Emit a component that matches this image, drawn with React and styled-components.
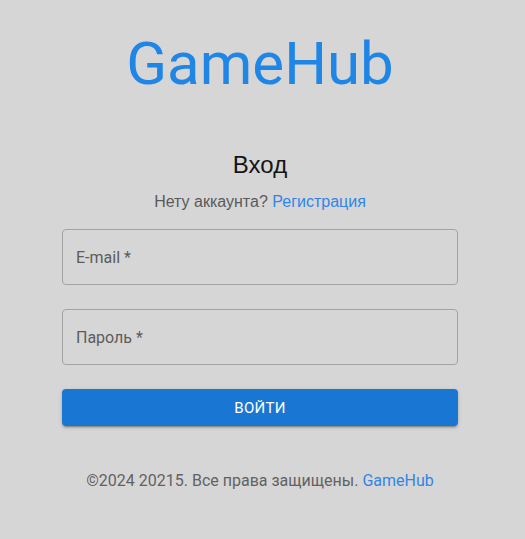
import React from "react";
import styled, { createGlobalStyle } from "styled-components";

const GlobalStyle = createGlobalStyle`
  html, body {
    margin: 0;
    padding: 0;
    background: #d6d6d6;
  }
  body {
    font-family: Roboto, "Liberation Sans", sans-serif;
  }
`;

const Page = styled.div`
  min-height: 539px;
  padding: 28px 5px 0 0;
  box-sizing: border-box;
  display: flex;
  flex-direction: column;
  align-items: center;
`;

const Logo = styled.h1`
  margin: 0;
  font-family: Roboto, sans-serif;
  font-weight: 400;
  font-size: 60px;
  line-height: 72px;
  color: #2086e6;
`;

const Form = styled.div`
  width: 396px;
  margin-top: 51px;
  display: flex;
  flex-direction: column;
  align-items: stretch;
`;

const Title = styled.h2`
  margin: 0;
  text-align: center;
  font-family: "Liberation Sans", Arial, sans-serif;
  font-weight: 400;
  font-size: 24px;
  line-height: 28px;
  color: #151515;
`;

const Hint = styled.p`
  margin: 13px 0 0;
  text-align: center;
  font-family: "Liberation Sans", Arial, sans-serif;
  font-size: 16px;
  line-height: 20px;
  color: #5a5a5a;
`;

const Link = styled.a`
  color: #2f86e8;
  text-decoration: none;
`;

const Field = styled.div`
  height: 56px;
  margin-top: ${(p) => p.$top}px;
  border: 1px solid #a3a3a3;
  border-radius: 4px;
  box-sizing: border-box;
  display: flex;
  align-items: center;
  padding: 0 13px;
  font-family: Roboto, sans-serif;
  font-size: 16px;
  color: #5c5c5c;
`;

const Button = styled.button`
  margin-top: 24px;
  height: 37px;
  border: none;
  border-radius: 4px;
  background: #1976d2;
  color: #fff;
  font-family: Roboto, sans-serif;
  font-size: 15px;
  letter-spacing: 0.3px;
  text-transform: uppercase;
  box-shadow: 0 3px 1px -2px rgba(0, 0, 0, 0.2), 0 2px 2px 0 rgba(0, 0, 0, 0.14),
    0 1px 5px 0 rgba(0, 0, 0, 0.12);
  cursor: pointer;
`;

const Footer = styled.p`
  margin: 45px 0 0;
  text-align: center;
  font-family: Roboto, sans-serif;
  font-size: 16px;
  line-height: 20px;
  color: #626262;
`;

export default function App() {
  return (
    <>
      <GlobalStyle />
      <Page>
        <Logo>GameHub</Logo>
        <Form>
          <Title>Вход</Title>
          <Hint>
            Нету аккаунта? <Link href="#">Регистрация</Link>
          </Hint>
          <Field $top={17}>E-mail *</Field>
          <Field $top={24}>Пароль *</Field>
          <Button>Войти</Button>
          <Footer>
            ©2024 20215. Все права защищены. <Link href="#">GameHub</Link>
          </Footer>
        </Form>
      </Page>
    </>
  );
}
